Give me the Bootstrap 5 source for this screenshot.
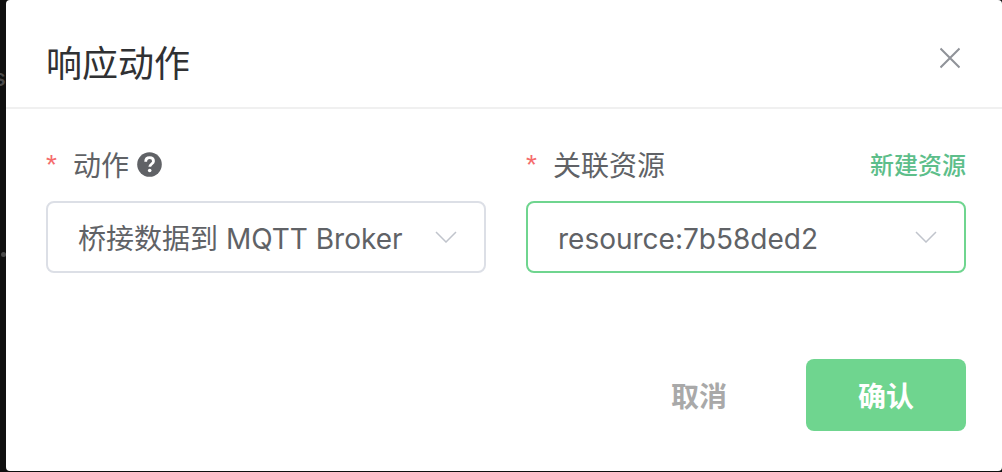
<!DOCTYPE html>
<html lang="zh-CN">
<head>
<meta charset="utf-8">
<meta name="viewport" content="width=device-width, initial-scale=1">
<title>响应动作</title>
<link href="https://cdn.jsdelivr.net/npm/bootstrap@5.3.0/dist/css/bootstrap.min.css" rel="stylesheet">
<style>
  body { background: #101010; color: #606266; font-family: Inter, "Noto Sans CJK SC", sans-serif; font-size: 28px; line-height: 40px; overflow: hidden; }
  .backdrop-text { position: absolute; left: -7px; top: 58px; font-size: 24px; font-weight: 500; color: #4a4a4a; }
  .backdrop-dot { position: absolute; left: 1px; top: 252px; width: 5px; height: 5px; border-radius: 50%; background: #4a4a4a; }
  .action-dialog { position: relative; margin: 0 0 1px 6px; background: #fff; border-radius: 4px; }
  .dialog-head { padding: 36px 38px 15px 40px; border-bottom: 2px solid #f0f0f0; }
  .dialog-head h1 { font-size: 36px; line-height: 56px; font-weight: 400; color: #303133; }
  .close-btn { line-height: 0; padding: 10px 4px; color: #909399; }
  .dialog-main { padding: 36px 36px 0 40px; }
  .fields { column-gap: 40px; }
  .field { flex: 1 1 0; min-width: 0; }
  .field-head { height: 40px; }
  .field-head label, .field-head a { padding-top: 2px; }
  .star { width: 27px; font-family: "Liberation Sans", Arial, sans-serif; color: #f56c6c; }
  .new-link { font-size: 24px; font-weight: 500; color: #5dbe8a; }
  .pick { height: 72px; padding: 3px 64px 0 30px; font-size: 28px; line-height: 40px; color: #606266; border: 2px solid #dcdfe6; border-radius: 8px;
    background-image: url("data:image/svg+xml,%3Csvg xmlns='http://www.w3.org/2000/svg' viewBox='0 0 22 12'%3E%3Cpath d='M1 1l10 10L21 1' fill='none' stroke='%23c0c4cc' stroke-width='1.5'/%3E%3C/svg%3E");
    background-size: 22px 12px; background-position: right 27px center; }
  .pick.current, .pick.current:focus { border-color: #6fd58f; box-shadow: none; }
  .dialog-foot { padding: 86px 36px 40px; gap: 27px; }
  .dialog-foot .btn { font-size: 28px; line-height: 40px; font-weight: 700; height: 72px; padding: 3px 50px 0; border-radius: 8px; border-width: 2px; }
  .cancel-btn { color: #a9a9a9; }
  .ok-btn { background: #6fd58f; color: #fff; }
</style>
</head>
<body>
<span class="backdrop-text" aria-hidden="true">s</span>
<span class="backdrop-dot"></span>
<main class="action-dialog" role="dialog" aria-labelledby="dialog-title">
  <header class="dialog-head d-flex justify-content-between align-items-start">
    <h1 id="dialog-title" class="m-0">响应动作</h1>
    <button type="button" class="close-btn border-0 bg-transparent" aria-label="关闭">
      <svg width="20" height="24" viewBox="0 0 20 24" fill="none" stroke="currentColor" stroke-width="2"><path d="M.5 2.5l19 19M19.500 2.500l-19 19"/></svg>
    </button>
  </header>
  <form>
    <div class="dialog-main">
      <div class="fields d-flex">
        <div class="field">
          <div class="field-head d-flex align-items-center mb-3">
            <span class="star">*</span>
            <label for="action">动作</label>
            <svg class="ms-2" width="26" height="26" viewBox="0 0 26 26" role="img" aria-label="帮助"><circle cx="12.500" cy="12.500" r="12.300" fill="#606266"/><path d="M8.700 9.700C8.700 7.200 10.300 5.700 12.600 5.700s3.900 1.400 3.900 3.500c0 2.600-3.700 3-3.700 5.500" fill="none" stroke="#fff" stroke-width="2.800"/><circle cx="12.700" cy="18.500" r="1.800" fill="#fff"/></svg>
          </div>
          <select id="action" class="form-select pick"><option>桥接数据到 MQTT Broker</option></select>
        </div>
        <div class="field">
          <div class="field-head d-flex align-items-center mb-3">
            <span class="star">*</span>
            <label for="resource">关联资源</label>
            <a href="#" class="new-link ms-auto text-decoration-none">新建资源</a>
          </div>
          <select id="resource" class="form-select pick current"><option>resource:7b58ded2</option></select>
        </div>
      </div>
    </div>
    <footer class="dialog-foot d-flex justify-content-end">
      <button type="button" class="btn cancel-btn">取消</button>
      <button type="submit" class="btn ok-btn">确认</button>
    </footer>
  </form>
</main>
<script src="https://cdn.jsdelivr.net/npm/bootstrap@5.3.0/dist/js/bootstrap.bundle.min.js"></script>
</body>
</html>
